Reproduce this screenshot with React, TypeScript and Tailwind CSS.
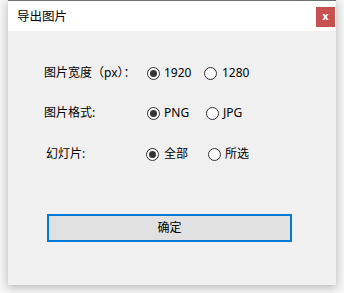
import React from "react";

function Radio({ checked, label, width, gap = 4 }: { checked: boolean; label: string; width?: number; gap?: number }) {
  return (
    <div className="flex items-center" style={width ? { width } : undefined}>
      <span className="w-[13px] h-[13px] rounded-full border border-[#333333] bg-white flex items-center justify-center shrink-0">
        {checked && <span className="w-[7px] h-[7px] rounded-full bg-[#333333]" />}
      </span>
      <span className="text-[12px] leading-none text-black" style={{ marginLeft: gap }}>{label}</span>
    </div>
  );
}

export default function App() {
  return (
    <div className="w-[344px] h-[293px] bg-[#f6f6f6] px-[8px]" style={{ fontFamily: '"Noto Sans", "Noto Sans CJK SC", sans-serif' }}>
      <div className="w-[328px] h-[285px] flex flex-col border-t border-[#707070] bg-[#f0f0f0] shadow-[0_2px_9px_rgba(0,0,0,0.28)]">
        <div className="h-[30px] bg-white flex items-start justify-between">
          <span className="ml-[9px] mt-[8px] text-[12.5px] leading-[16px] text-black">导出图片</span>
          <div className="mt-[6px] mr-[1px] w-[19px] h-[20px] bg-[#c75050] flex items-center justify-center text-white text-[10px] font-bold leading-none" style={{ fontFamily: '"DejaVu Sans", sans-serif' }}>x</div>
        </div>
        <div className="flex flex-col">
          <div className="flex items-center h-[20px] mt-[32px]">
            <span className="ml-[36px] w-[103px] text-[12px] leading-none text-black">图片宽度（px）：</span>
            <Radio checked label="1920" width={57} />
            <Radio checked={false} label="1280" gap={5} />
          </div>
          <div className="flex items-center h-[20px] mt-[20px]">
            <span className="ml-[36px] w-[103px] text-[12px] leading-none text-black">图片格式:</span>
            <Radio checked label="PNG" width={59} />
            <Radio checked={false} label="JPG" gap={4} />
          </div>
          <div className="flex items-center h-[20px] mt-[21px]">
            <span className="ml-[38px] w-[100px] text-[12px] leading-none text-black">幻灯片:</span>
            <Radio checked label="全部" width={62} gap={5} />
            <Radio checked={false} label="所选" gap={4} />
          </div>
          <button className="ml-[39px] mt-[50px] w-[245px] h-[28px] border-2 border-[#0078d7] bg-[#e1e1e1] flex items-center justify-center text-[12px] leading-none text-black">
            确定
          </button>
        </div>
      </div>
    </div>
  );
}
